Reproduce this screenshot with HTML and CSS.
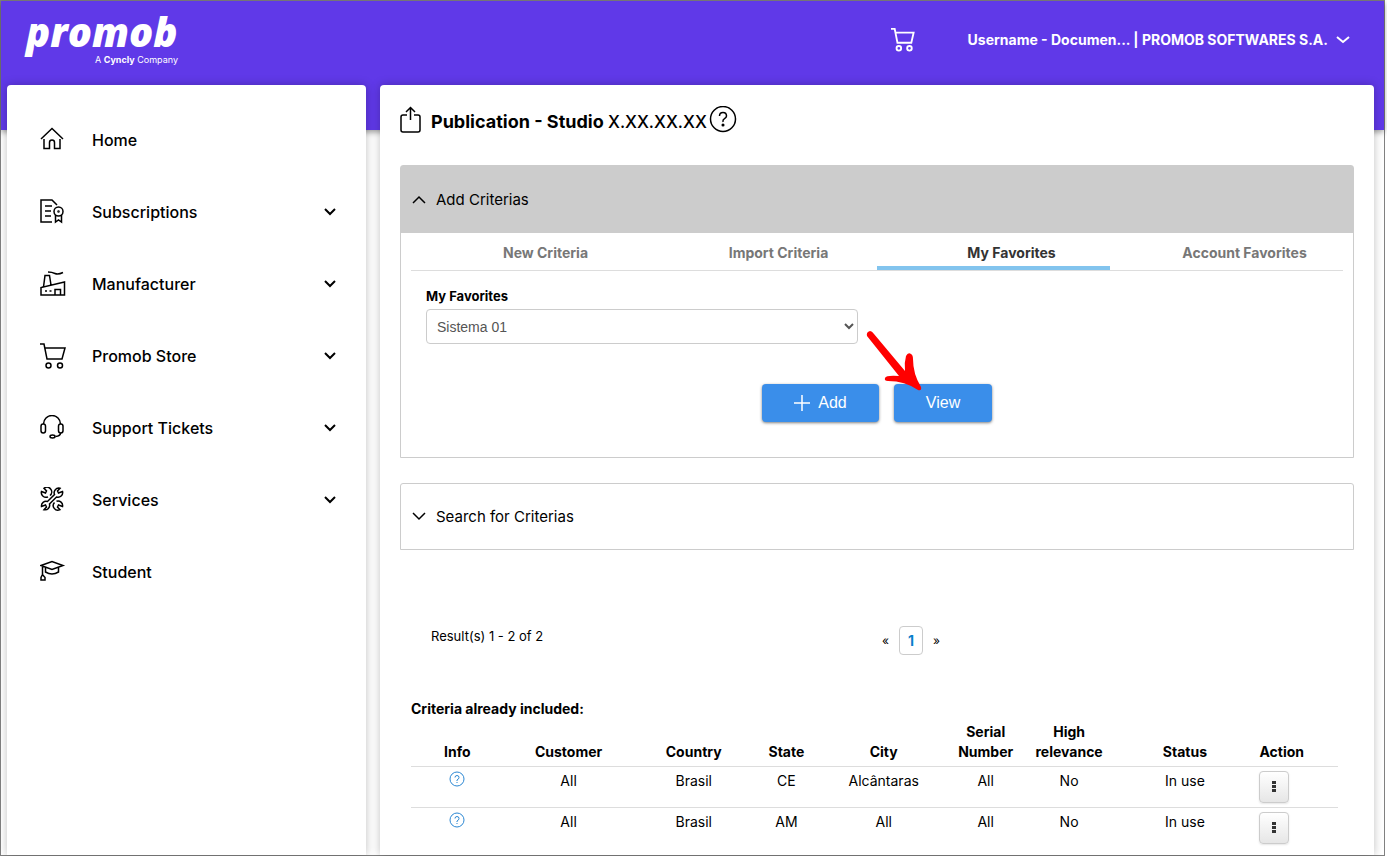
FILE: index.html
```html
<!DOCTYPE html>
<html lang="en">
<head>
    <meta charset="UTF-8">
    <meta name="viewport" content="width=device-width, initial-scale=1.0">
    <title>Publication - Studio</title>
    <link rel="stylesheet" href="styles.css">
</head>
<body>
    <div class="page">
        <header class="topbar">
            <a class="logo" href="#">
                <span class="logo-name">promob</span>
                <span class="logo-tagline">A <b>Cyncly</b> Company</span>
            </a>
            <div class="topbar-right">
                <a class="topbar-cart" href="#" aria-label="Cart">
                    <svg width="24" height="24" viewBox="0 0 26 26" fill="none" stroke="currentColor" stroke-width="2"><path d="M0 1h4l3 15h15l2.500-11H5"/><circle cx="8.500" cy="22" r="2.500"/><circle cx="20" cy="22" r="2.500"/></svg>
                </a>
                <button class="user-menu" type="button">
                    Username - Documen... | PROMOB SOFTWARES S.A.
                    <svg width="14" height="8" viewBox="0 0 14 8" fill="none" stroke="currentColor" stroke-width="2"><path d="M1 1l6 5 6-5"/></svg>
                </button>
            </div>
        </header>

        <div class="workspace">
            <nav class="sidebar">
                <a class="menu-item" href="#">
                    <svg class="menu-icon" viewBox="0 0 26 26"><path d="M1 12L12 1.500 23 12M4 12v9.500h5.500v-6a2.500 2.500 0 0 1 5 0v6H20V12"/></svg>
                    <span>Home</span>
                </a>
                <a class="menu-item" href="#">
                    <svg class="menu-icon" viewBox="0 0 26 26"><path d="M12 23H1V1h11l5 5M5 7h7M5 12h6M5 17h6"/><circle cx="18.500" cy="12.500" r="4.500"/><circle cx="18.500" cy="12.500" r="0.500"/><path d="M15.500 16v7l3-2 3 2v-7"/></svg>
                    <span>Subscriptions</span>
                    <svg class="chevron" viewBox="0 0 12 8"><path d="M1 1l5 5 5-5"/></svg>
                </a>
                <a class="menu-item" href="#">
                    <svg class="menu-icon" viewBox="0 0 26 26"><path d="M1 24v-7.500L24.500 11v13zM3.500 16L5 4.500h4.500l1.500 9.500M8 1q4 0 7 1.500t8-1M15 24v-5.500h5.500V24M5 20h2M9.500 20h2"/></svg>
                    <span>Manufacturer</span>
                    <svg class="chevron" viewBox="0 0 12 8"><path d="M1 1l5 5 5-5"/></svg>
                </a>
                <a class="menu-item" href="#">
                    <svg class="menu-icon" viewBox="0 0 26 26"><path d="M0 1h4l3 15h15l3-11H5"/><circle cx="8.500" cy="22.500" r="2.500"/><circle cx="20" cy="22.500" r="2.500"/></svg>
                    <span>Promob Store</span>
                    <svg class="chevron" viewBox="0 0 12 8"><path d="M1 1l5 5 5-5"/></svg>
                </a>
                <a class="menu-item" href="#">
                    <svg class="menu-icon" viewBox="0 0 26 26"><path d="M3.500 9a8.500 8.500 0 0 1 17 0M20.500 18q0 3-5 3.500"/><rect x="1" y="9" width="4.500" height="9" rx="2.200"/><rect x="18.500" y="9" width="4.500" height="9" rx="2.200"/><ellipse cx="12.500" cy="21.500" rx="2.500" ry="1.500"/></svg>
                    <span>Support Tickets</span>
                    <svg class="chevron" viewBox="0 0 12 8"><path d="M1 1l5 5 5-5"/></svg>
                </a>
                <a class="menu-item" href="#">
                    <svg class="menu-icon" viewBox="0 0 26 26"><path d="M10 8.500A4.600 4.600 0 0 0 4 1.300L6.500 4 5.500 6 1.500 4.500A4.600 4.600 0 0 0 8 9.800M14.500 7.500A4.600 4.600 0 0 1 20 1.300L17.500 4 18.500 6 22.500 4.500A4.600 4.600 0 0 1 16.500 10L9.500 17A4.600 4.600 0 0 1 4 22.700L6.500 20 5.500 18 1.500 19.500A4.600 4.600 0 0 1 7.500 14.500ZM14.500 15.500A4.600 4.600 0 0 0 20 22.700L17.500 20 18.500 18 22.500 19.500A4.600 4.600 0 0 0 16.500 14.200"/></svg>
                    <span>Services</span>
                    <svg class="chevron" viewBox="0 0 12 8"><path d="M1 1l5 5 5-5"/></svg>
                </a>
                <a class="menu-item" href="#">
                    <svg class="menu-icon" viewBox="0 0 26 26"><path d="M1 6.500L12 2.500l11 4-11 4zM5.500 8.500v4.500q6.500 4 13 0V8.500M2.500 7v8.500M2.500 15.500l-1.500 3V21h4v-2.500z"/></svg>
                    <span>Student</span>
                </a>
            </nav>

            <main class="content">
                <h1 class="page-title">
                    <svg width="22" height="28" viewBox="0 0 22 28"><path d="M7 9H3a2 2 0 0 0-2 2v13a2 2 0 0 0 2 2h15a2 2 0 0 0 2-2V11a2 2 0 0 0-2-2h-4M10.500 14V2M6 6l4.500-4.500L15 6"/></svg>
                    <span class="title-text">Publication - Studio <span class="version">X.XX.XX.XX</span></span>
                    <svg class="title-help" width="28" height="28" viewBox="0 0 28 28"><circle cx="14" cy="13" r="12.500"/><path d="M10.500 10q0-3.500 3.500-3.500t3.500 3.500q0 1.500-2 2.700T14 16"/><circle cx="14" cy="19" r="0.800"/></svg>
                </h1>

                <section class="accordion">
                    <button class="accordion-head open" type="button">
                        <svg width="14" height="9" viewBox="0 0 14 9"><path d="M1 8l6-6 6 6"/></svg>
                        Add Criterias
                    </button>
                    <div class="accordion-body">
                        <div class="tabs" role="tablist">
                            <button class="tab" type="button" role="tab">New Criteria</button>
                            <button class="tab" type="button" role="tab">Import Criteria</button>
                            <button class="tab active" type="button" role="tab" aria-selected="true">My Favorites</button>
                            <button class="tab" type="button" role="tab">Account Favorites</button>
                        </div>
                        <div class="field">
                            <label for="favorites">My Favorites</label>
                            <select id="favorites">
                                <option>Sistema 01</option>
                            </select>
                        </div>
                        <div class="actions">
                            <button class="btn btn-add" type="button">
                                <svg width="16" height="16" viewBox="0 0 16 16" stroke="currentColor" stroke-width="1.500"><path d="M8 0v16M0 8h16"/></svg>
                                Add
                            </button>
                            <div class="view-wrap">
                                <button class="btn btn-view" type="button">View</button>
                                <!-- Red arrow pointing to the View button -->
                                <svg class="arrow" width="58" height="64" viewBox="0 0 58 64"><path d="M2 7Q1 3 5 2q2 0 4 3L40 42Q39 34 41 27q2-4 5-2 2 1 2 5 0 15 8 28 1 4-3 3Q40 52 23 52q-4 0-3-3 1-3 14-2Z" fill="#ff0000"/></svg>
                            </div>
                        </div>
                    </div>
                </section>

                <section class="accordion">
                    <button class="accordion-head" type="button">
                        <svg width="14" height="9" viewBox="0 0 14 9"><path d="M1 1l6 6 6-6"/></svg>
                        Search for Criterias
                    </button>
                </section>

                <div class="results">
                    <span>Result(s) 1 - 2 of 2</span>
                    <div class="pager">
                        <a href="#">«</a>
                        <a class="current" href="#">1</a>
                        <a href="#">»</a>
                    </div>
                </div>

                <section class="included">
                    <h2>Criteria already included:</h2>
                    <table>
                        <colgroup>
                            <col class="col-info"><col class="col-customer"><col class="col-country">
                            <col class="col-state"><col class="col-city"><col class="col-serial">
                            <col class="col-relevance"><col class="col-status"><col class="col-action">
                        </colgroup>
                        <thead>
                            <tr>
                                <th>Info</th>
                                <th>Customer</th>
                                <th>Country</th>
                                <th>State</th>
                                <th>City</th>
                                <th>Serial<br>Number</th>
                                <th>High<br>relevance</th>
                                <th>Status</th>
                                <th class="action">Action</th>
                            </tr>
                        </thead>
                        <tbody>
                            <tr>
                                <td><svg class="info" viewBox="0 0 16 16"><circle cx="8" cy="8" r="7"/><path d="M6 6.500Q6 4.500 8 4.500t2 2Q10 8 8 9v1M8 11v1"/></svg></td>
                                <td>All</td>
                                <td>Brasil</td>
                                <td>CE</td>
                                <td>Alcântaras</td>
                                <td>All</td>
                                <td>No</td>
                                <td>In use</td>
                                <td class="action"><button class="more" type="button" aria-label="More"><svg width="4" height="12" viewBox="0 0 4 12"><path d="M0 0h4v3H0zM0 4h4v3H0zM0 8h4v3H0z"/></svg></button></td>
                            </tr>
                            <tr>
                                <td><svg class="info" viewBox="0 0 16 16"><circle cx="8" cy="8" r="7"/><path d="M6 6.500Q6 4.500 8 4.500t2 2Q10 8 8 9v1M8 11v1"/></svg></td>
                                <td>All</td>
                                <td>Brasil</td>
                                <td>AM</td>
                                <td>All</td>
                                <td>All</td>
                                <td>No</td>
                                <td>In use</td>
                                <td class="action"><button class="more" type="button" aria-label="More"><svg width="4" height="12" viewBox="0 0 4 12"><path d="M0 0h4v3H0zM0 4h4v3H0zM0 8h4v3H0z"/></svg></button></td>
                            </tr>
                        </tbody>
                    </table>
                </section>
            </main>
        </div>
    </div>
</body>
</html>
```
FILE: styles.css
```css
* {
    box-sizing: border-box;
}
body {
    margin: 0;
    background-color: #fff;
    color: #000;
    font-family: Inter, "Liberation Sans", sans-serif;
    font-size: 14px;
    line-height: 20px;
}
a {
    color: inherit;
    text-decoration: none;
}
button {
    border: none;
    background: none;
    padding: 0;
    color: inherit;
    font: inherit;
    cursor: pointer;
}
.page {
    display: flex;
    flex-direction: column;
    min-height: 100vh;
    margin-right: 2px;
    border: 1px solid #808080;
}

/* Top bar */
.topbar {
    display: flex;
    justify-content: space-between;
    height: 129px;
    padding: 9px 34px 0 25px;
    background-color: #6039e8;
    color: #fff;
    box-shadow: 0 2px 6px rgba(0, 0, 0, 0.4);
}
.logo {
    display: flex;
    flex-direction: column;
    width: 152px;
}
.logo-name {
    font-family: "Open Sans", sans-serif;
    font-size: 40px;
    font-style: italic;
    font-weight: 800;
    line-height: 44px;
}
.logo-tagline {
    align-self: flex-end;
    font-size: 9px;
    line-height: 12px;
}
.topbar-right {
    display: flex;
    align-items: center;
    gap: 53px;
    height: 60px;
}
.topbar-cart svg {
    display: block;
}
.user-menu {
    display: flex;
    align-items: center;
    gap: 8px;
    font-size: 14px;
    font-weight: 700;
}

/* Layout */
.workspace {
    display: flex;
    flex: 1;
    gap: 14px;
    margin-top: -45px;
    padding: 0 10px 0 6px;
}
.sidebar,
.content {
    background-color: #fff;
    border-radius: 4px 4px 0 0;
    box-shadow: 0 0 10px rgba(0, 0, 0, 0.25);
}
.sidebar {
    flex: none;
    width: 359px;
    padding: 19px 30px 0 33px;
}
.menu-item {
    display: flex;
    align-items: center;
    gap: 26px;
    height: 72px;
    font-size: 16px;
    font-weight: 500;
}
.menu-icon {
    width: 26px;
    height: 26px;
    fill: none;
    stroke: #000;
    stroke-width: 1.5px;
}
.chevron {
    width: 12px;
    height: 8px;
    margin-left: auto;
    fill: none;
    stroke: #000;
    stroke-width: 2px;
}
.content {
    flex: 1;
    min-width: 0;
    padding: 20px 20px 0;
}
.page-title {
    display: flex;
    align-items: center;
    gap: 9px;
    height: 30px;
    margin: 0 0 30px;
    font-size: 18px;
    font-weight: 700;
}
.page-title svg {
    fill: none;
    stroke: #000;
    stroke-width: 1.5px;
}
.title-text {
    padding-top: 3px;
}
.version {
    font-size: 17px;
    font-weight: 500;
}
.page-title .title-help {
    margin-left: -7px;
}

/* Accordions */
.accordion {
    margin-bottom: 25px;
    border: 1px solid #ccc;
    border-radius: 3px 3px 0 0;
}
.accordion-head {
    display: flex;
    align-items: center;
    gap: 10px;
    width: 100%;
    height: 65px;
    padding: 0 11px;
    font-size: 15px;
}
.accordion-head.open {
    height: 67px;
    background-color: #ccc;
}
.accordion-head svg {
    fill: none;
    stroke: #000;
    stroke-width: 1.5px;
}
.accordion-body {
    padding: 0 10px 35px;
}
.tabs {
    display: grid;
    grid-template-columns: repeat(4, 1fr);
    border-bottom: 1px solid #ddd;
}
.tab {
    height: 37px;
    padding: 6px 0 0 36px;
    border-bottom: 4px solid transparent;
    color: #777;
    font-size: 14px;
    font-weight: 700;
}
.tab.active {
    border-color: #82c4ee;
    color: #333;
}
.field {
    display: flex;
    flex-direction: column;
    gap: 3px;
    width: 48%;
    padding: 15px 0 0 15px;
}
.field label {
    font-size: 13px;
    font-weight: 700;
}
.field select {
    height: 35px;
    padding: 0 6px;
    border: 1px solid #ccc;
    border-radius: 4px;
    background-color: #fff;
    color: #555;
    font-family: "Liberation Sans", sans-serif;
    font-size: 14px;
}
.actions {
    display: flex;
    justify-content: center;
    gap: 15px;
    padding-top: 40px;
}
.btn {
    display: flex;
    align-items: center;
    justify-content: center;
    gap: 8px;
    height: 38px;
    border-radius: 4px;
    background-color: #3a8eea;
    color: #fff;
    font-family: "Liberation Sans", sans-serif;
    font-size: 16px;
    box-shadow: 0 1px 3px rgba(0, 0, 0, 0.5);
}
.btn-add {
    width: 117px;
}
.btn-view {
    width: 98px;
}
.view-wrap {
    position: relative;
}
.arrow {
    position: absolute;
    left: -29px;
    top: -55px;
}

/* Results and pager */
.results {
    display: grid;
    grid-template-columns: 1fr auto 1fr;
    padding: 51px 31px 0;
    font-size: 13px;
}
.pager {
    display: flex;
    align-items: center;
    gap: 10px;
    margin-left: 68px;
    font-size: 12px;
}
.pager .current {
    width: 24px;
    border: 1px solid #ccc;
    border-radius: 4px;
    color: #0a7fcb;
    font-size: 14px;
    font-weight: 700;
    line-height: 27px;
    text-align: center;
}

/* Criteria table */
.included {
    padding: 44px 16px 6px 11px;
}
.included h2 {
    margin: 0 0 3px;
    font-size: 14px;
    font-weight: 700;
}
table {
    width: 100%;
    border-collapse: collapse;
    table-layout: fixed;
}
th,
td {
    padding: 4px 0;
    font-size: 14px;
    text-align: center;
    vertical-align: top;
}
th {
    padding-top: 0;
    vertical-align: bottom;
    font-weight: 700;
}
td {
    border-top: 1px solid #ddd;
}
.col-info { width: 10%; }
.col-customer { width: 14%; }
.col-country { width: 13%; }
.col-state { width: 7%; }
.col-city { width: 14%; }
.col-serial { width: 8%; }
.col-relevance { width: 10%; }
.col-status { width: 15%; }
.col-action { width: 9%; }
th.action,
td.action {
    padding-left: 5px;
    text-align: left;
}
.info {
    display: block;
    width: 16px;
    height: 16px;
    margin: 0 auto;
    fill: none;
    stroke: #2b87d3;
}
.more {
    display: flex;
    align-items: center;
    justify-content: center;
    width: 30px;
    height: 32px;
    border: 1px solid #ccc;
    border-radius: 4px;
    background-image: linear-gradient(#fff, #e6e6e6);
    box-shadow: 0 1px 2px rgba(0, 0, 0, 0.1);
    fill: #333;
}
```
